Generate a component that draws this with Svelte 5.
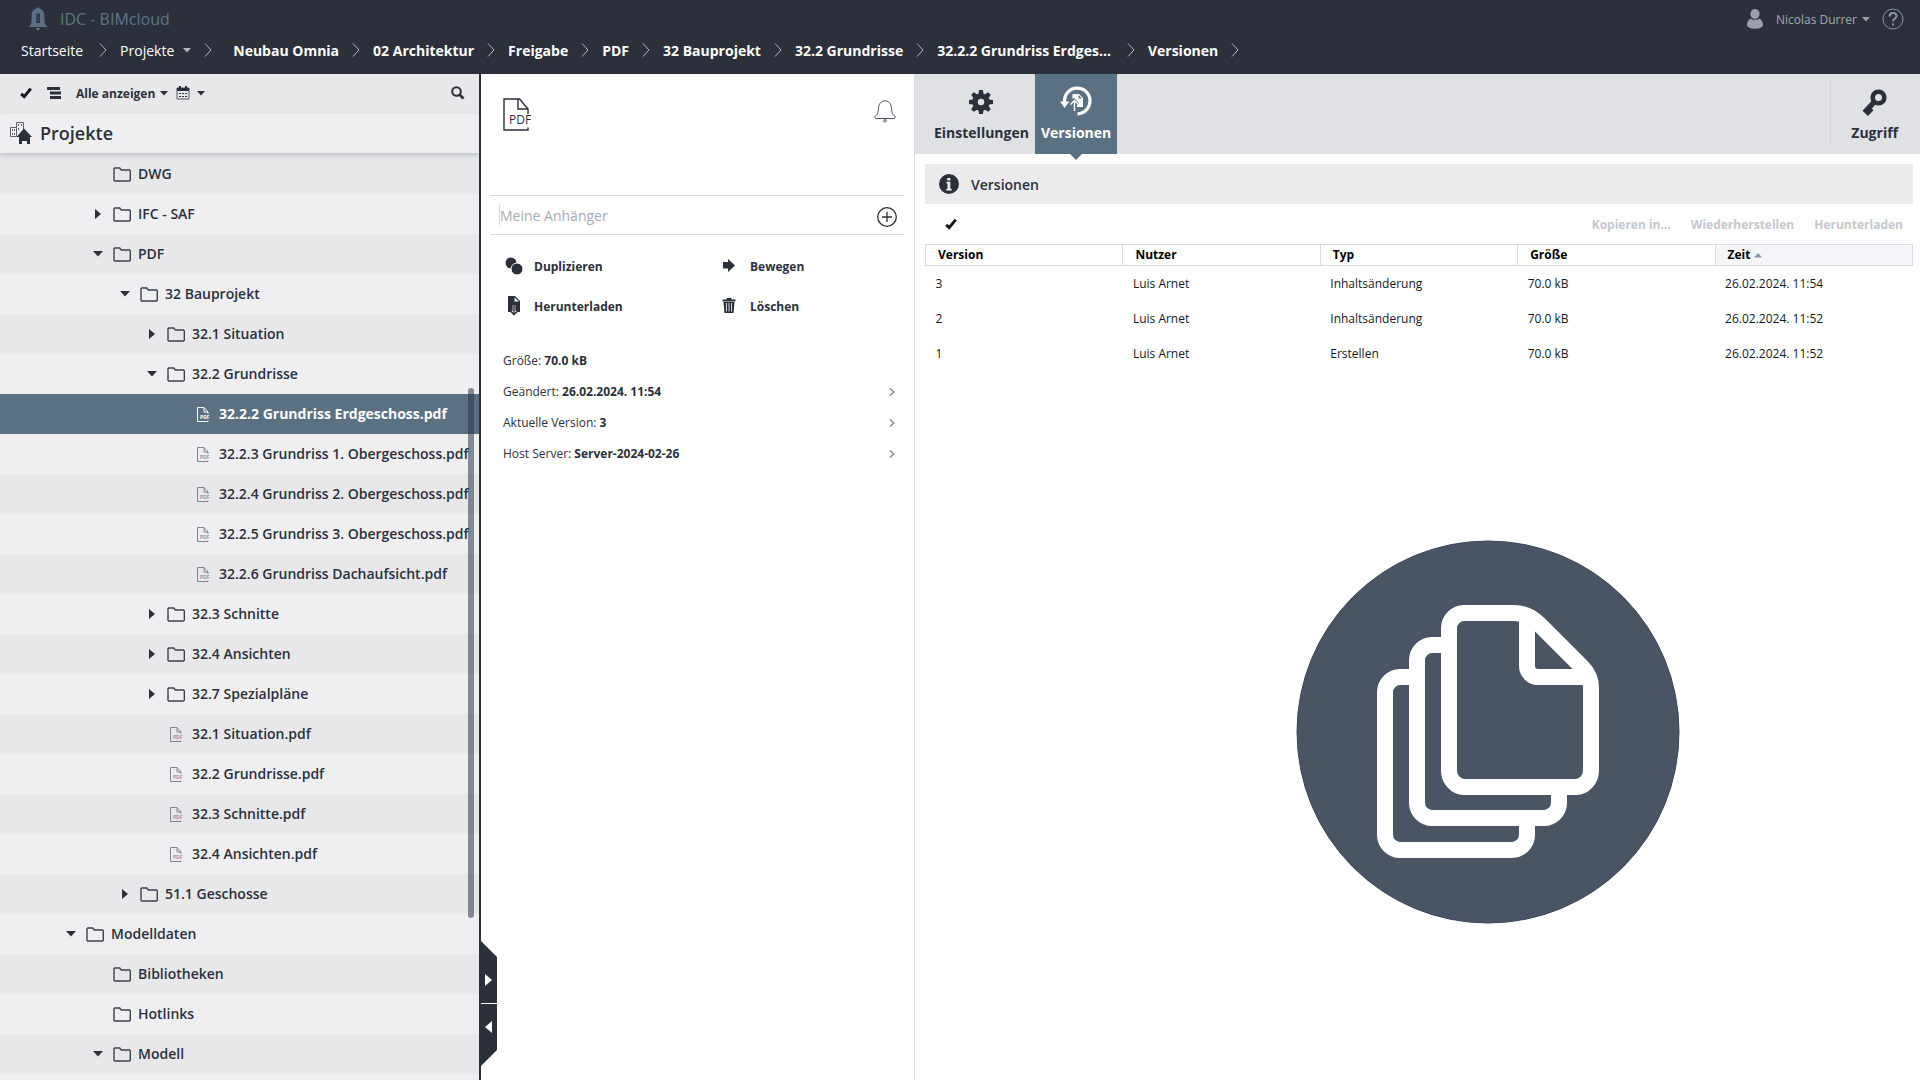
<script lang="ts">
	interface TreeRow {
		label: string;
		depth: number;
		kind: 'folder' | 'pdf';
		open?: boolean;
	}

	const crumbs = [
		'Neubau Omnia',
		'02 Architektur',
		'Freigabe',
		'PDF',
		'32 Bauprojekt',
		'32.2 Grundrisse',
		'32.2.2 Grundriss Erdges...',
		'Versionen'
	];

	// open: true = expanded, false = collapsed, undefined = no arrow
	const rows: TreeRow[] = [
		{ label: 'DWG', depth: 3, kind: 'folder' },
		{ label: 'IFC - SAF', depth: 3, kind: 'folder', open: false },
		{ label: 'PDF', depth: 3, kind: 'folder', open: true },
		{ label: '32 Bauprojekt', depth: 4, kind: 'folder', open: true },
		{ label: '32.1 Situation', depth: 5, kind: 'folder', open: false },
		{ label: '32.2 Grundrisse', depth: 5, kind: 'folder', open: true },
		{ label: '32.2.2 Grundriss Erdgeschoss.pdf', depth: 6, kind: 'pdf' },
		{ label: '32.2.3 Grundriss 1. Obergeschoss.pdf', depth: 6, kind: 'pdf' },
		{ label: '32.2.4 Grundriss 2. Obergeschoss.pdf', depth: 6, kind: 'pdf' },
		{ label: '32.2.5 Grundriss 3. Obergeschoss.pdf', depth: 6, kind: 'pdf' },
		{ label: '32.2.6 Grundriss Dachaufsicht.pdf', depth: 6, kind: 'pdf' },
		{ label: '32.3 Schnitte', depth: 5, kind: 'folder', open: false },
		{ label: '32.4 Ansichten', depth: 5, kind: 'folder', open: false },
		{ label: '32.7 Spezialpläne', depth: 5, kind: 'folder', open: false },
		{ label: '32.1 Situation.pdf', depth: 5, kind: 'pdf' },
		{ label: '32.2 Grundrisse.pdf', depth: 5, kind: 'pdf' },
		{ label: '32.3 Schnitte.pdf', depth: 5, kind: 'pdf' },
		{ label: '32.4 Ansichten.pdf', depth: 5, kind: 'pdf' },
		{ label: '51.1 Geschosse', depth: 4, kind: 'folder', open: false },
		{ label: 'Modelldaten', depth: 2, kind: 'folder', open: true },
		{ label: 'Bibliotheken', depth: 3, kind: 'folder' },
		{ label: 'Hotlinks', depth: 3, kind: 'folder' },
		{ label: 'Modell', depth: 3, kind: 'folder', open: true }
	];

	const details = [
		{ name: 'Größe:', value: '70.0 kB', link: false },
		{ name: 'Geändert:', value: '26.02.2024. 11:54', link: true },
		{ name: 'Aktuelle Version:', value: '3', link: true },
		{ name: 'Host Server:', value: 'Server-2024-02-26', link: true }
	];

	const versions = [
		{ nr: 3, user: 'Luis Arnet', type: 'Inhaltsänderung', size: '70.0 kB', time: '26.02.2024. 11:54' },
		{ nr: 2, user: 'Luis Arnet', type: 'Inhaltsänderung', size: '70.0 kB', time: '26.02.2024. 11:52' },
		{ nr: 1, user: 'Luis Arnet', type: 'Erstellen', size: '70.0 kB', time: '26.02.2024. 11:52' }
	];

	let selected = $state(6);
	let attachment = $state('');
</script>

{#snippet sep()}
	<svg class="sep" viewBox="0 0 8 14" aria-hidden="true"><path d="M1 .5 7 7 1 13.5" /></svg>
{/snippet}

{#snippet caret()}
	<svg class="caret" viewBox="0 0 8 5" aria-hidden="true"><path d="M0 0h8L4 4.5z" /></svg>
{/snippet}

{#snippet tick()}
	<svg class="tick" viewBox="0 0 12 12" aria-hidden="true"><path d="M1.2 6.8 4.2 9.6 10.8 1.6" /></svg>
{/snippet}

<div class="app">
	<header class="topbar">
		<div class="brand-row">
			<svg class="brand-icon" viewBox="0 0 20 24" aria-hidden="true">
				<path
					fill="#5a7184"
					d="M10 0 11.500 1.500C15.500 2.500 16.500 6 16.500 10v4c0 3 1 3.500 3 6H.500c2-2.500 3-3 3-6v-4c0-4 1-7.500 5-8.500z"
				/>
				<path fill="#2b303b" d="M8.300 6.500h3.600V16H8.300z" />
				<path fill="#43535f" d="M9.700 8h.900v6.500h-.900z" />
				<path fill="#5a7184" d="M8 21h4l-1 2.500H9z" />
			</svg>
			<span class="brand">IDC - BIMcloud</span>
			<button class="user">
				<svg class="user-icon" viewBox="0 0 16 20" aria-hidden="true">
					<ellipse cx="8" cy="5" rx="4.600" ry="5" />
					<path d="M3.500 9.500C5 11.300 11 11.300 12.500 9.500 15 11 16 13.500 16 16c0 5-16 5-16 0 0-2.500 1-5 3.500-6.500z" />
				</svg>
				Nicolas Durrer
				{@render caret()}
			</button>
			<button class="help" aria-label="Hilfe">
				<svg viewBox="0 0 22 22" aria-hidden="true">
					<circle cx="11" cy="11" r="10" />
					<path class="mark" d="M7.500 8.500C7.500 4 14.500 4 14.500 8c0 2.500-3.500 2.500-3.500 5.500M11 15.500v2" />
				</svg>
			</button>
		</div>
		<nav class="crumbs" aria-label="Pfad">
			<a href="#start" class="plain first">Startseite</a>
			{@render sep()}
			<a href="#projekte" class="plain projects">Projekte {@render caret()}</a>
			{@render sep()}
			<span class="gap"></span>
			{#each crumbs as crumb, i}
				<a href="#crumb-{i}" class:cut={crumb.endsWith('...')}>{crumb}</a>
				{@render sep()}
			{/each}
		</nav>
	</header>

	<main class="columns">
		<aside class="tree-panel">
			<div class="tree-tools">
				<button aria-label="Auswählen">{@render tick()}</button>
				<button class="list-btn" aria-label="Struktur">
					<svg viewBox="0 0 14 12" width="14" height="12" aria-hidden="true">
						<path d="M0 0h13v3H0zM3 4.500h11v3H3zM3 9h11v3H3z" />
					</svg>
				</button>
				<button class="filter">Alle anzeigen {@render caret()}</button>
				<button class="date" aria-label="Datum">
					<svg viewBox="0 0 14 14" width="14" height="14" aria-hidden="true">
						<path d="M1 2h12v11H1z" fill="none" stroke="#4f5663" />
						<path d="M1 2h12v3H1zM3 0h2v3H3zM9 0h2v3H9z" />
						<path d="M3 7h2v1H3zM6 7h2v1H6zM9 7h2v1H9zM3 10h2v1H3zM6 10h2v1H6zM9 10h2v1H9z" />
					</svg>
					{@render caret()}
				</button>
				<button class="search" aria-label="Suchen">
					<svg viewBox="0 0 14 14" width="14" height="14" aria-hidden="true">
						<circle cx="5.500" cy="5.500" r="4.300" fill="none" stroke="#2b303b" stroke-width="2" />
						<path d="M8.500 8.500 12.600 12.600" stroke="#2b303b" stroke-width="2.600" />
					</svg>
				</button>
			</div>
			<h1 class="tree-title">
				<svg viewBox="0 0 22 22" width="22" height="22" aria-hidden="true">
					<path d="M6.500 12V.500h7V8M.500 5.500h6v9h-6z" fill="none" stroke="#5d6471" />
					<path
						d="M2 7h1v2H2zM4 7h1v2H4zM2 11h1v2H2zM4 11h1v2H4zM8 2h1v2H8zM11 2h1v2h-1zM8 6h1v2H8z"
						fill="#5d6471"
					/>
					<path d="M14 6.500 22 15h-2v7h-3v-3h-5v3H9v-7H6.500z" />
				</svg>
				Projekte
			</h1>
			<ul class="tree">
				{#each rows as row, i}
					<li>
						<button
							class="row"
							class:selected={selected === i}
							style="--depth: {row.depth}"
							onclick={() => (selected = i)}
						>
							<span class="arrow">
								{#if row.open === true}
									<svg viewBox="0 0 10 6" width="10" height="6" aria-hidden="true"><path d="M0 0h10L5 5.500z" /></svg>
								{:else if row.open === false}
									<svg viewBox="0 0 6 10" width="6" height="10" aria-hidden="true"><path d="M0 0 6 5 0 10z" /></svg>
								{/if}
							</span>
							<span class="icon">
								{#if row.kind === 'folder'}
									<svg viewBox="0 0 18 15" width="18" height="15" aria-hidden="true">
										<path class="folder" d="M1 1.800 1.700 1h5l1.600 2h8.200l.800.800v9.400l-.800.800H1.700L1 13.200z" />
									</svg>
								{:else}
									<svg viewBox="0 0 13 15" width="13" height="15" aria-hidden="true">
										<path class="page" d="M11 13.500v1H.500V.500h6.500L11 5M7 .500V5h4v2" />
										<text class="pdf-text" x="3" y="12">PDF</text>
									</svg>
								{/if}
							</span>
							<span class="label">{row.label}</span>
						</button>
					</li>
				{/each}
			</ul>
			<div class="scroll-thumb"></div>
		</aside>

		<section class="details">
			<div class="file-head">
				<svg viewBox="0 0 29 33" width="29" height="33" aria-hidden="true">
					<path d="M25 29.500V32H1V1h15.500L25 11v5M15 1v10h10" fill="none" stroke="#2b303b" stroke-width="1.400" />
					<text class="pdf-big" x="6" y="26">PDF</text>
				</svg>
				<button aria-label="Benachrichtigungen">
					<svg viewBox="0 0 22 23" width="22" height="23" aria-hidden="true">
						<path
							d="M11 .800C15.500 1.200 17 4 17.500 8c.500 5 .500 6 3.300 8.300.900 1.300.200 2.200-.800 2.200H2c-1 0-1.700-.900-.800-2.200C4 14 4 13 4.500 8 5 4 6.500 1.200 11 .800z"
							fill="none"
							stroke="#4a5364"
						/>
						<circle cx="11" cy="20.800" r="1.200" fill="none" stroke="#4a5364" />
					</svg>
				</button>
			</div>

			<div class="attach">
				<input type="text" placeholder="Meine Anhänger" aria-label="Meine Anhänger" bind:value={attachment} />
				<button aria-label="Hinzufügen">
					<svg viewBox="0 0 20 20" width="20" height="20" aria-hidden="true">
						<path
							d="M10 .700a9.300 9.300 0 1 1 0 18.600A9.300 9.300 0 0 1 10 .700zM10 5v10M5 10h10"
							fill="none"
							stroke="#2b303b"
							stroke-width="1.300"
						/>
					</svg>
				</button>
			</div>

			<div class="actions">
				<button>
					<svg viewBox="0 0 18 18" width="18" height="18" aria-hidden="true">
						<circle cx="6" cy="6" r="5.500" />
						<circle cx="12" cy="12" r="6" stroke="#fff" />
					</svg>
					Duplizieren
				</button>
				<button>
					<svg viewBox="0 0 18 18" width="18" height="18" aria-hidden="true">
						<path d="M2 5h5V2l7 6.500L7 15v-3.500H2z" />
					</svg>
					Bewegen
				</button>
				<button>
					<svg viewBox="0 0 18 20" width="18" height="20" aria-hidden="true">
						<path d="M3 0h7l5 5v11H3z" />
						<path d="M9.500 1.500v4h4.500z" fill="#fff" />
						<path d="M9 9v9M6 15.500 9 18.500 12 15.500" fill="none" stroke="#fff" stroke-width="2.600" />
						<path d="M9 9v9.500M5 14.500 9 18.700 13 14.500" fill="none" stroke="#2b303b" stroke-width="1.400" />
					</svg>
					Herunterladen
				</button>
				<button>
					<svg viewBox="0 0 18 18" width="18" height="18" aria-hidden="true">
						<path d="M1.500 2.500h4V1h5v1.500h4v2h-13zM2.500 5h11l-1 11h-9z" />
						<path d="M5.500 6v8.500M8 6v8.500M10.500 6v8.500" stroke="#fff" stroke-width=".8" />
					</svg>
					Löschen
				</button>
			</div>

			<ul class="facts">
				{#each details as item}
					<li>
						<span>{item.name} <b>{item.value}</b></span>
						{#if item.link}
							<svg viewBox="0 0 6 8" width="6" height="8" aria-hidden="true">
								<path d="M1 .500 4.800 4 1 7.500" fill="none" stroke="#8b919c" stroke-width="1.600" />
							</svg>
						{/if}
					</li>
				{/each}
			</ul>

			<div class="handle">
				<button aria-label="Ausklappen">
					<svg viewBox="0 0 7 12" width="7" height="12" aria-hidden="true"><path d="M0 0 7 6 0 12z" /></svg>
				</button>
				<button aria-label="Einklappen">
					<svg viewBox="0 0 7 12" width="7" height="12" aria-hidden="true"><path d="M7 0 0 6 7 12z" /></svg>
				</button>
			</div>
		</section>

		<section class="content">
			<div class="tabs">
				<button class="tab">
					<svg viewBox="-12 -12 24 24" width="24" height="24" aria-hidden="true">
						<circle r="6" fill="none" stroke="#2b303b" stroke-width="5.500" />
						{#each [0, 45, 90, 135] as angle}
							<path transform="rotate({angle})" d="M-2.600-8-1.900-12H1.900L2.600-8zM-2.600 8-1.900 12H1.900L2.600 8z" />
						{/each}
					</svg>
					Einstellungen
				</button>
				<button class="tab active">
					<svg class="versions-icon" viewBox="0 0 32 30" width="32" height="30" aria-hidden="true">
						<path
							d="M4.500 16C4 8 10 2.200 17 2.200c7.500 0 13 5.600 13 12.600S24.500 27.800 17.500 27.800"
							fill="none"
							stroke="#fff"
							stroke-width="3.200"
						/>
						<path d="M0 15.500h9.200L4.600 22z" />
						<path d="M12.500 8h6.500l4 4v9h-6v-5l-3-4-1.500 1z" />
						<path d="M18.500 9v3.500H22z" fill="#5a7184" />
						<path d="M14.500 25V15.500M10.500 18.500 14.500 14.500 18 18" fill="none" stroke="#5a7184" stroke-width="3" />
						<path d="M14.500 25V15M10.500 18.500 14.500 14.500 18 18" fill="none" stroke="#fff" stroke-width="1.400" />
					</svg>
					Versionen
				</button>
				<button class="tab access">
					<svg viewBox="0 0 26 28" width="26" height="28" aria-hidden="true">
						<circle cx="16.500" cy="9.500" r="5.800" fill="none" stroke="#2b303b" stroke-width="4.600" />
						<path d="M10.500 12 14 15.800 10 20.500 11.300 22.500 6 28 .500 22.800z" />
					</svg>
					Zugriff
				</button>
			</div>

			<div class="pane">
				<h2 class="pane-title">
					<svg viewBox="0 0 20 20" width="20" height="20" aria-hidden="true">
						<circle cx="10" cy="10" r="10" />
						<path d="M8.300 4h3v2.400h-3zM7.500 7.800h3.800v7h1.400v1.700H7.300v-1.700h1.200V9.500h-1z" fill="#ebebed" />
					</svg>
					Versionen
				</h2>

				<div class="pane-tools">
					<button class="select-all" aria-label="Alle auswählen">{@render tick()}</button>
					<button disabled>Kopieren in...</button>
					<button disabled>Wiederherstellen</button>
					<button disabled>Herunterladen</button>
				</div>

				<table>
					<thead>
						<tr>
							<th>Version</th>
							<th>Nutzer</th>
							<th>Typ</th>
							<th>Größe</th>
							<th class="sorted">
								Zeit
								<svg viewBox="0 0 8 5" width="8" height="5" aria-hidden="true"><path d="M0 4.500h8L4 0z" /></svg>
							</th>
						</tr>
					</thead>
					<tbody>
						{#each versions as version}
							<tr>
								<td>{version.nr}</td>
								<td>{version.user}</td>
								<td>{version.type}</td>
								<td>{version.size}</td>
								<td>{version.time}</td>
							</tr>
						{/each}
					</tbody>
				</table>

				<div class="preview">
					<svg viewBox="0 0 384 384" width="384" height="384" aria-hidden="true">
						<circle cx="192" cy="192" r="191" fill="#495565" stroke="#3c4859" />
						<g fill="none" stroke="#fff" stroke-width="16">
							<path d="M114 137H104C96 137 89 144 89 152V295C89 303 96 310 104 310H216C224 310 231 303 231 295V285" />
							<path d="M145 105H136C128 105 121 112 121 120V263C121 271 128 278 136 278H248C256 278 263 271 263 263V254" />
							<path d="M168 73H218C227 73 236 77 243 84L286 127C292 133 295 140 295 148V231C295 239 288 247 280 247H168C160 247 153 239 153 231V88C153 80 160 73 168 73Z" />
							<path d="M231 78V126C231 132 236 137 242 137H289" />
						</g>
					</svg>
				</div>
			</div>
		</section>
	</main>
</div>

<style>
	:global(body) {
		margin: 0;
		background: #fff;
	}

	.app {
		display: flex;
		flex-direction: column;
		height: 100vh;
		overflow: hidden;
		font-family: 'Open Sans', 'Noto Sans', sans-serif;
		font-size: 12px;
		color: #2b303b;
	}

	button {
		display: flex;
		align-items: center;
		padding: 0;
		border: none;
		background: none;
		font: inherit;
		color: inherit;
		cursor: pointer;
	}

	svg {
		display: block;
		flex: none;
		fill: #2b303b;
	}

	ul {
		margin: 0;
		padding: 0;
		list-style: none;
	}

	.caret {
		width: 8px;
		height: 5px;
	}

	.tick {
		width: 12px;
		height: 12px;
		fill: none;
		stroke: #14181f;
		stroke-width: 3;
	}

	/* Top bar */
	.topbar {
		flex: none;
		height: 74px;
		background: #2b303b;
	}

	.brand-row {
		display: flex;
		align-items: center;
		height: 38px;
		padding: 0 16px 0 28px;
	}

	.brand-icon {
		width: 20px;
		height: 24px;
	}

	.brand {
		flex: 1;
		margin-left: 12px;
		font-size: 16px;
		color: #5f7486;
	}

	.user {
		gap: 5px;
		margin-right: 12px;
		font-size: 12px;
		color: #a3a8b1;
	}

	.user svg {
		fill: #9a9fa9;
	}

	.user-icon {
		width: 16px;
		height: 20px;
		margin-right: 8px;
	}

	.help svg {
		width: 22px;
		height: 22px;
		fill: none;
		stroke: #8d939e;
		stroke-width: 1;
	}

	.help .mark {
		stroke-width: 2;
	}

	.crumbs {
		display: flex;
		align-items: center;
		height: 24px;
		padding-left: 21px;
	}

	.crumbs a {
		display: flex;
		align-items: center;
		margin: 0 13px;
		font-size: 14px;
		font-weight: 700;
		color: #fff;
		text-decoration: none;
		white-space: nowrap;
	}

	.crumbs a.plain {
		font-weight: 400;
	}

	.crumbs a.first {
		margin: 0 16px 0 0;
	}

	.crumbs a.cut {
		margin-right: 16px;
	}

	.crumbs .projects {
		gap: 9px;
	}

	.crumbs .caret {
		fill: #b4b8c0;
	}

	.gap {
		width: 8px;
	}

	.sep {
		width: 8px;
		height: 14px;
		fill: none;
		stroke: #b4b8c0;
	}

	.columns {
		display: flex;
		flex: 1;
		min-height: 0;
	}

	/* Project tree */
	.tree-panel {
		position: relative;
		display: flex;
		flex-direction: column;
		flex: none;
		box-sizing: border-box;
		width: calc(25% + 1px);
		border-right: 2px solid #2b303b;
		background: #efeff2;
	}

	.tree-tools {
		display: flex;
		align-items: center;
		height: 38px;
		padding: 0 14px 2px 20px;
		background: #e8e8ea;
	}

	.list-btn {
		margin-left: 15px;
	}

	.filter {
		gap: 5px;
		margin-left: 15px;
		font-weight: 700;
	}

	.date {
		gap: 7px;
		margin-left: 8px;
	}

	.search {
		margin-left: auto;
	}

	.tree-title {
		display: flex;
		align-items: center;
		gap: 8px;
		z-index: 1;
		flex: none;
		height: 37px;
		margin: 0;
		padding: 0 0 2px 10px;
		border-bottom: 1px solid #c5c9d1;
		box-shadow: 0 2px 4px rgba(90, 105, 125, 0.25);
		font-size: 18px;
		font-weight: 600;
	}

	.tree {
		flex: 1;
		min-height: 0;
		overflow: hidden;
	}

	.row {
		width: 100%;
		height: 40px;
		padding-left: calc(7px + var(--depth) * 27px);
		font-size: 14px;
		font-weight: 600;
		white-space: nowrap;
		overflow: hidden;
	}

	li:nth-child(odd) .row {
		background: #e8e8ea;
	}

	li .row.selected {
		background: #5a7184;
		color: #fff;
		font-weight: 700;
	}

	.label {
		padding-bottom: 2px;
	}

	.arrow {
		display: flex;
		justify-content: center;
		flex: none;
		width: 20px;
	}

	.icon {
		display: flex;
		justify-content: center;
		flex: none;
		width: 18px;
		margin: 0 7px 0 5px;
	}

	.folder {
		fill: none;
		stroke: #3b4250;
		stroke-width: 1.4;
	}

	.page {
		fill: none;
		stroke: #7d8491;
	}

	.pdf-text {
		font-size: 5px;
		fill: #7d8491;
	}

	.selected .page {
		stroke: #fff;
	}

	.selected .pdf-text {
		fill: #fff;
	}

	.scroll-thumb {
		position: absolute;
		top: 314px;
		right: 5px;
		width: 6px;
		height: 530px;
		border-radius: 3px;
		background: rgba(43, 54, 72, 0.55);
	}

	/* File details */
	.details {
		position: relative;
		flex: none;
		box-sizing: border-box;
		width: 434px;
		padding: 0 10px 0 9px;
		border-right: 1px solid #d9dbe1;
	}

	.file-head {
		display: flex;
		align-items: flex-start;
		justify-content: space-between;
		height: 97px;
		padding: 24px 8px 0 13px;
	}

	.file-head button {
		padding-top: 2px;
	}

	.attach {
		display: flex;
		align-items: center;
		height: 38px;
		padding: 0 7px 0 9px;
		border: 1px solid #d5d8de;
		border-width: 1px 0;
	}

	.attach input {
		flex: 1;
		height: 20px;
		padding: 0;
		border: none;
		border-left: 1px solid #d5d8de;
		outline: none;
		font: inherit;
		font-size: 14px;
	}

	.attach input::placeholder {
		color: #a6abb5;
		opacity: 1;
	}

	.attach button {
		padding-top: 4px;
	}

	.actions {
		display: grid;
		grid-template-columns: 216px 1fr;
		grid-auto-rows: 40px;
		padding: 11px 0 0 15px;
		font-weight: 700;
	}

	.actions button {
		gap: 11px;
	}

	.facts {
		padding: 19px 9px 0 13px;
	}

	.facts li {
		display: flex;
		align-items: center;
		justify-content: space-between;
		height: 31px;
	}

	.facts b {
		font-weight: 700;
	}

	/* Collapse handle over the panel edge */
	.handle {
		position: absolute;
		left: 0;
		bottom: 14px;
		display: flex;
		flex-direction: column;
		gap: 1px;
		width: 16px;
		height: 125px;
		clip-path: polygon(0 0, 100% 16px, 100% 109px, 0 100%);
	}

	.handle button {
		flex: 1;
		padding-left: 4px;
		background: #2b303b;
	}

	.handle button:first-child {
		padding-top: 16px;
	}

	.handle button:last-child {
		padding-bottom: 16px;
	}

	.handle svg {
		fill: #fff;
	}

	/* Content */
	.content {
		display: flex;
		flex: 1;
		flex-direction: column;
		min-width: 0;
	}

	.tabs {
		display: flex;
		flex: none;
		height: 80px;
		padding: 0 15px 0 12px;
		background: #e0e1e5;
	}

	.tab {
		position: relative;
		flex-direction: column;
		padding: 12px 6px 0 7px;
		font-size: 14px;
		font-weight: 700;
	}

	.tab svg {
		height: 32px;
		margin-bottom: 5px;
	}

	.tab.active {
		padding: 12px 6px 0;
		background: #5a7184;
		color: #fff;
	}

	.tab.active::after {
		content: '';
		position: absolute;
		top: 100%;
		left: 50%;
		margin-left: -6px;
		border: 6px solid transparent;
		border-top-color: #5a7184;
		border-bottom: none;
	}

	.tab svg.versions-icon {
		height: 30px;
		margin-bottom: 7px;
		fill: #fff;
	}

	.tab.access {
		margin: 8px 0 8px auto;
		padding: 4px 7px 0 20px;
		border-left: 1px dotted #c2c5cb;
	}

	.pane {
		display: flex;
		flex: 1;
		flex-direction: column;
		min-height: 0;
		padding: 10px 7px 0 10px;
	}

	.pane-title {
		display: flex;
		align-items: center;
		gap: 12px;
		height: 40px;
		margin: 0;
		padding-left: 14px;
		background: #ebebed;
		font-size: 14px;
		font-weight: 600;
	}

	.pane-tools {
		display: flex;
		align-items: center;
		gap: 20px;
		height: 40px;
		padding: 0 10px 0 20px;
		font-weight: 700;
	}

	.pane-tools button:disabled {
		color: #c4c7ce;
		cursor: default;
	}

	.select-all {
		margin-right: auto;
	}

	table {
		width: 100%;
		table-layout: fixed;
		border-collapse: collapse;
		color: #14181f;
	}

	th {
		height: 20px;
		padding: 0 12px;
		border: 1px solid #d9dbe3;
		line-height: 18px;
		font-weight: 700;
		text-align: left;
		color: #000;
	}

	th.sorted {
		background: #f6f6fa;
	}

	th svg {
		display: inline-block;
		vertical-align: middle;
		fill: #8d93a0;
	}

	td {
		height: 35px;
		padding: 0 10px;
	}

	.preview {
		display: flex;
		flex: 1;
		align-items: center;
		justify-content: center;
		padding: 13px 0 0 138px;
	}
</style>
